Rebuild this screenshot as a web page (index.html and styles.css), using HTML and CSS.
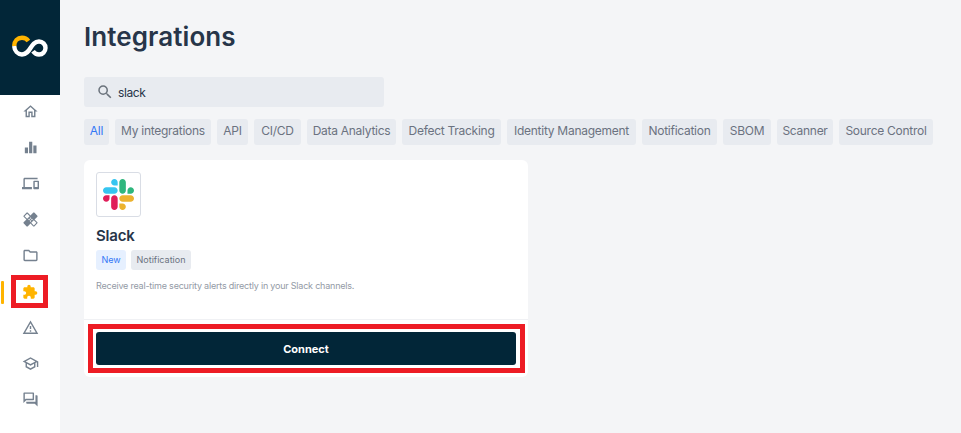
FILE: index.html
```html
<!DOCTYPE html>
<html lang="en">
<head>
<meta charset="utf-8">
<title>Integrations</title>
<link rel="stylesheet" href="styles.css">
</head>
<body>
<div class="app">
  <aside class="sidebar">
    <div class="brand">
      <svg width="38" height="24" viewBox="11 34 38 24" fill="none" stroke-width="4.4"><path stroke="#fff" d="M14.2 46C14.5 51 17.8 54.5 22 54.5C31 54.5 30 41.5 39 41.5A6.5 6.5 0 0 1 39 54.5C36.3 54.5 34.5 53.2 33 51.2"/><path stroke="#ffb400" d="M14.2 46C14.2 41 17.6 37.7 22 37.7C24.8 37.7 26.8 38.8 28.4 41"/></svg>
    </div>
    <nav class="nav">
      <a class="item"><svg viewBox="0 0 24 24"><path d="m12 5.69 5 4.5V18h-2v-6H9v6H7v-7.81l5-4.5M12 3 2 12h3v8h6v-6h2v6h6v-8h3L12 3z"/></svg></a>
      <a class="item"><svg viewBox="0 0 24 24"><path d="M4 12h4.500v8H4zM10 4h4.500v16H10zM16 9h4.500v11H16z"/></svg></a>
      <a class="item"><svg viewBox="0 0 24 24"><path d="M4 6h18V4H4c-1.1 0-2 .9-2 2v11H0v3h14v-3H4V6zm19 2h-6c-.55 0-1 .45-1 1v10c0 .55.45 1 1 1h6c.55 0 1-.45 1-1V9c0-.55-.45-1-1-1zm-1 9h-4v-7h4v7z"/></svg></a>
      <a class="item"><svg viewBox="0 0 24 24"><path d="M17.73 12.02l3.98-3.98c.39-.39.39-1.02 0-1.41l-4.34-4.34c-.39-.39-1.02-.39-1.41 0l-3.98 3.98L8 2.29C7.8 2.1 7.55 2 7.29 2c-.25 0-.51.1-.7.29L2.25 6.63c-.39.39-.39 1.02 0 1.41l3.98 3.98L2.25 16c-.39.39-.39 1.02 0 1.41l4.34 4.34c.39.39 1.02.39 1.41 0l3.98-3.98 3.98 3.98c.2.2.45.29.71.29.26 0 .51-.1.71-.29l4.34-4.34c.39-.39.39-1.02 0-1.41l-3.99-3.98zM12 9c.55 0 1 .45 1 1s-.45 1-1 1-1-.45-1-1 .45-1 1-1zm-4.71 1.96L3.66 7.34l3.63-3.63 3.62 3.62-3.62 3.63zM10 13c-.55 0-1-.45-1-1s.45-1 1-1 1 .45 1 1-.45 1-1 1zm2 2c-.55 0-1-.45-1-1s.45-1 1-1 1 .45 1 1-.45 1-1 1zm2-4c.55 0 1 .45 1 1s-.45 1-1 1-1-.45-1-1 .45-1 1-1zm2.66 9.34l-3.63-3.62 3.63-3.63 3.62 3.62-3.62 3.63z" fill-rule="evenodd"/></svg></a>
      <a class="item"><svg viewBox="0 0 24 24"><path d="m9.17 6 2 2H20v10H4V6h5.17M10 4H4c-1.1 0-1.99.9-1.99 2L2 18c0 1.1.9 2 2 2h16c1.1 0 2-.9 2-2V8c0-1.1-.9-2-2-2h-8l-2-2z"/></svg></a>
      <a class="item active"><svg viewBox="0 0 24 24"><path d="M20.5 11H19V7c0-1.1-.9-2-2-2h-4V3.500a2.500 2.500 0 0 0-5 0V5H4c-1.100 0-1.990.9-1.990 2v3.800H3.500c1.490 0 2.700 1.210 2.700 2.700s-1.210 2.700-2.700 2.700H2V20c0 1.100.9 2 2 2h3.800v-1.500c0-1.490 1.210-2.700 2.700-2.700s2.700 1.210 2.700 2.700V22H17c1.100 0 2-.9 2-2v-4h1.500a2.500 2.500 0 0 0 0-5z"/></svg></a>
      <a class="item"><svg viewBox="0 0 24 24"><path d="M12 5.990 19.530 19H4.470L12 5.990M12 2 1 21h22L12 2zm1 14h-2v2h2v-2zm0-6h-2v4h2v-4z"/></svg></a>
      <a class="item"><svg viewBox="0 0 24 24"><path d="M12 3 1 9l4 2.180v6L12 21l7-3.820v-6l2-1.090V17h2V9L12 3zm6.820 6L12 12.720 5.180 9 12 5.280 18.820 9zM17 15.990l-5 2.730-5-2.730v-3.720L12 15l5-2.730v3.720z"/></svg></a>
      <a class="item"><svg viewBox="0 0 24 24"><path d="M15 4v7H5.170L4 12.170V4h11m1-2H3c-.55 0-1 .45-1 1v14l4-4h10c.55 0 1-.45 1-1V3c0-.55-.45-1-1-1zm5 4h-2v9H6v2c0 .55.45 1 1 1h11l4 4V7c0-.55-.45-1-1-1z"/></svg></a>
    </nav>
  </aside>
  <main class="main">
    <h1 class="title">Integrations</h1>
    <div class="search">
      <svg viewBox="0 0 24 24"><path d="M15.500 14h-.79l-.28-.27A6.470 6.470 0 0 0 16 9.500 6.500 6.500 0 1 0 9.500 16c1.610 0 3.090-.59 4.230-1.570l.27.28v.79l5 4.990L20.490 19l-4.990-5zm-6 0C7.010 14 5 11.990 5 9.500S7.010 5 9.500 5 14 7.010 14 9.500 11.990 14 9.500 14z"/></svg>
      <span>slack</span>
    </div>
    <div class="filters">
      <span class="chip selected">All</span>
      <span class="chip w-my">My integrations</span>
      <span class="chip w-api">API</span>
      <span class="chip w-ci">CI/CD</span>
      <span class="chip w-data">Data Analytics</span>
      <span class="chip w-defect">Defect Tracking</span>
      <span class="chip w-identity">Identity Management</span>
      <span class="chip w-notif">Notification</span>
      <span class="chip w-sbom">SBOM</span>
      <span class="chip w-scan">Scanner</span>
      <span class="chip w-source">Source Control</span>
    </div>
    <section class="card">
      <div class="info">
        <div class="logo">
          <svg width="31" height="31" viewBox="0 0 122.800 122.800"><path fill="#e01e5a" d="M25.800 77.600c0 7.100-5.800 12.900-12.900 12.900S0 84.700 0 77.600s5.800-12.900 12.900-12.900h12.900v12.900zm6.500 0c0-7.100 5.800-12.900 12.900-12.900s12.900 5.800 12.900 12.900v32.300c0 7.100-5.800 12.900-12.900 12.900s-12.900-5.800-12.900-12.900V77.600z"/><path fill="#36c5f0" d="M45.200 25.800c-7.100 0-12.900-5.800-12.900-12.900S38.100 0 45.200 0s12.900 5.800 12.900 12.900v12.900H45.200zm0 6.500c7.100 0 12.900 5.800 12.900 12.900s-5.800 12.900-12.900 12.900H12.900C5.800 58.100 0 52.300 0 45.200s5.800-12.900 12.900-12.900h32.300z"/><path fill="#2eb67d" d="M97 45.200c0-7.100 5.800-12.900 12.900-12.900s12.900 5.800 12.900 12.900-5.800 12.900-12.900 12.900H97V45.200zm-6.500 0c0 7.100-5.800 12.900-12.900 12.900s-12.900-5.800-12.900-12.900V12.900C64.700 5.800 70.500 0 77.600 0s12.900 5.800 12.900 12.900v32.300z"/><path fill="#ecb22e" d="M77.600 97c7.100 0 12.900 5.800 12.900 12.900s-5.800 12.900-12.900 12.900-12.900-5.800-12.900-12.900V97h12.900zm0-6.500c-7.100 0-12.900-5.800-12.900-12.900s5.800-12.900 12.900-12.900h32.300c7.100 0 12.900 5.800 12.900 12.900s-5.800 12.900-12.900 12.900H77.600z"/></svg>
        </div>
        <h2 class="name">Slack</h2>
        <div class="tags"><span class="tag new">New</span><span class="tag kind">Notification</span></div>
        <p class="desc">Receive real-time security alerts directly in your Slack channels.</p>
      </div>
      <div class="action"><button class="connect">Connect</button></div>
    </section>
  </main>
</div>
</body>
</html>
```
FILE: styles.css
```css
*, *::before, *::after { box-sizing: border-box; }
body { margin: 0; background: #f4f5f7; font-family: Inter, "Liberation Sans", sans-serif; }
.app { display: flex; width: 961px; height: 433px; overflow: hidden; }
.sidebar { width: 60px; flex: none; background: #fff; }
.brand { height: 95px; padding: 34px 0 0 11px; background: #022638; }
.brand svg { display: block; }
.nav { display: flex; flex-direction: column; }
.item { position: relative; display: flex; align-items: center; justify-content: center; height: 36px; padding-bottom: 3px; fill: #75818f; }
.item svg { width: 17px; height: 17px; }
.item.active { fill: #ffb400; }
.item.active svg { width: 16px; height: 16px; }
.item.active::before { content: ""; position: absolute; left: 1px; top: 6px; width: 3px; height: 23px; border-radius: 1px; background: #ffb400; }
.item.active::after { content: ""; position: absolute; left: 11px; top: 0; width: 37px; height: 33px; border: 5px solid #ed1c24; }
.main { flex: 1; padding: 20px 0 0 24px; }
.title { margin: 0; height: 57px; font-size: 26px; line-height: 34px; font-weight: 600; letter-spacing: 0.08px; color: #273549; }
.search { display: flex; align-items: center; gap: 4px; width: 300px; height: 30px; padding-left: 12px; border-radius: 3px; background: #e8ebf0; font-size: 12px; color: #273549; letter-spacing: -0.4px; }
.search svg { width: 18px; height: 18px; fill: #6b737c; }
.filters { display: flex; gap: 6px; margin-top: 12px; }
.chip { flex: none; height: 26px; border-radius: 3px; background: #e8ebf0; color: #6b7280; font-size: 12px; line-height: 24px; letter-spacing: -0.27px; text-align: center; white-space: nowrap; }
.chip.selected { width: 25px; color: #3377f6; }
.w-my { width: 96px; }
.w-api { width: 31px; }
.w-ci { width: 47px; }
.w-data { width: 89px; }
.w-defect { width: 99px; }
.w-identity { width: 129px; }
.w-notif { width: 75px; }
.w-sbom { width: 48px; }
.w-scan { width: 56px; }
.w-source { width: 94px; }
.card { width: 444px; height: 217px; margin-top: 15px; border-radius: 6px; background: #fff; }
.info { height: 160px; padding: 12px; border-bottom: 1px solid #f0f1f4; }
.logo { display: flex; align-items: center; justify-content: center; width: 45px; height: 45px; border: 1px solid #d9dde5; border-radius: 3px; }
.name { margin: 9px 0 4px; font-size: 15px; line-height: 20px; font-weight: 600; letter-spacing: -0.2px; color: #273549; }
.tags { display: flex; gap: 5px; }
.tag { height: 20px; border-radius: 3px; font-size: 9px; line-height: 20px; text-align: center; }
.tag.new { width: 30px; background: #e6f0ff; color: #3377f6; }
.tag.kind { width: 60px; background: #e8ebf0; color: #6b7280; }
.desc { margin: 9px 0 0; font-size: 9px; line-height: 14px; letter-spacing: -0.21px; color: #939aa5; white-space: nowrap; }
.action { position: relative; padding: 12px; }
.action::before { content: ""; position: absolute; left: 4px; top: 4px; width: 437px; height: 49px; border: 5px solid #ed1c24; }
.connect { display: block; width: 420px; height: 33px; padding: 0; border: 0; border-radius: 3px; background: #022638; color: #fff; font: 700 11px Inter, sans-serif; }
```
